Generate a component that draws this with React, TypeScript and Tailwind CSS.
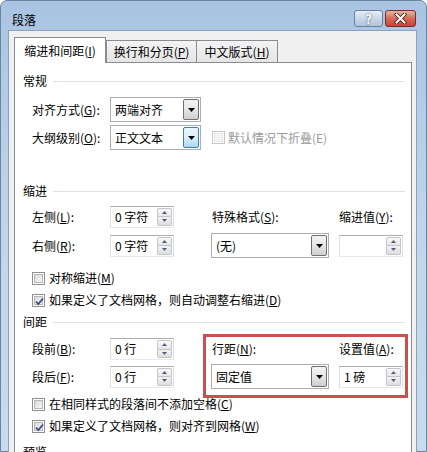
import React from 'react';

// Win7 style "段落" paragraph dialog

function Arrow({ up = false }: { up?: boolean }) {
  return (
    <svg width="5" height="3" viewBox="0 0 5 3">
      <path d={up ? 'M0 3h5L2.5 0z' : 'M0 0h5L2.5 3z'} fill="#4e5f7c" />
    </svg>
  );
}

function Spin({ value = '' }: { value?: string }) {
  return (
    <div className="flex h-[22px] w-[64px] items-center border border-[#abadb3] border-x-[#dbdfe6] border-b-[#e3e9ef] bg-white pl-[4px] pr-px">
      <span className="flex-1 whitespace-nowrap">{value}</span>
      <div className="flex h-[18px] w-[15px] flex-col">
        <div className="flex flex-1 items-center justify-center rounded-t-[2px] border border-[#c3c5c9] bg-linear-to-b from-[#f9f9f9] to-[#e6e6e6]">
          <Arrow up />
        </div>
        <div className="flex flex-1 items-center justify-center rounded-b-[2px] border border-t-0 border-[#c3c5c9] bg-linear-to-b from-[#f2f2f2] to-[#dedede]">
          <Arrow />
        </div>
      </div>
    </div>
  );
}

function Combo({
  value,
  className = '',
  focused = false,
}: {
  value: string;
  className?: string;
  focused?: boolean;
}) {
  return (
    <div className={`flex items-center border border-[#abadb3] bg-white pl-[4px] pr-px ${className}`}>
      <span className="flex-1 whitespace-nowrap">{value}</span>
      <div
        className={`my-px flex w-[16px] items-center justify-center self-stretch rounded-[2px] border ${
          focused
            ? 'border-[#3c7fb1] bg-linear-to-b from-[#eaf6fd] via-[#d9effc] to-[#a9daf5]'
            : 'border-[#707070] bg-linear-to-b from-[#f4f4f4] via-[#e6e6e6] to-[#cfcfcf]'
        }`}
      >
        <svg width="7" height="4" viewBox="0 0 7 4">
          <path d="M0 0h7L3.5 4z" fill="#000" />
        </svg>
      </div>
    </div>
  );
}

function Check({ checked = false, disabled = false }: { checked?: boolean; disabled?: boolean }) {
  return (
    <span
      className={`relative flex h-[13px] w-[13px] shrink-0 items-center justify-center border bg-white ${
        disabled ? 'border-[#c6c6c6]' : 'border-[#8e8f8f]'
      }`}
    >
      <span
        className={`h-[9px] w-[9px] border ${
          disabled
            ? 'border-[#e6e6e6] bg-[#f4f4f4]'
            : 'border-[#b4b6b9] bg-linear-to-br from-[#d9dadb] to-[#f7f7f7]'
        }`}
      />
      {checked && (
        <svg className="absolute left-[1px] top-[1px]" width="11" height="11" viewBox="0 0 11 11">
          <path d="M2 5.5l2.3 2.6L9 2.5" fill="none" stroke="#3b4f86" strokeWidth="1.8" />
        </svg>
      )}
    </span>
  );
}

function CheckRow({ label, checked = false }: { label: React.ReactNode; checked?: boolean }) {
  return (
    <div className="flex h-[20px] items-center gap-[4px] pl-[9px]">
      <Check checked={checked} />
      <span className="whitespace-nowrap">{label}</span>
    </div>
  );
}

function Section({ title, className = '' }: { title: string; className?: string }) {
  return (
    <div className={`flex h-[20px] items-center gap-[6px] ${className}`}>
      <span>{title}</span>
      <div className="h-px flex-1 bg-[#dde1e6]" />
    </div>
  );
}

export default function App() {
  return (
    <div className="h-[452px] w-[427px] overflow-hidden font-['Noto_Sans_CJK_SC','Microsoft_YaHei',sans-serif] text-[12px] leading-[16px] text-black">
      <div className="flex h-full flex-col rounded-t-[7px] border border-[#6d849f] bg-linear-to-b from-[#a9c4e3] via-[#c0d5eb] to-[#c8dbef]">
        {/* Title bar */}
        <div className="flex h-[29px] shrink-0 items-start">
          <span className="ml-[11px] mt-[11px]">段落</span>
          <div className="ml-auto mr-[10px] mt-[9px] flex gap-[2px]">
            <div className="flex h-[17px] w-[29px] items-center justify-center rounded-[3px] border border-[#6b7f99] bg-linear-to-b from-[#e6eef8] via-[#cbd8e8] to-[#b2c4da] text-[13px] font-bold leading-none text-white [text-shadow:0_0_2px_#2c3e57]">
              ?
            </div>
            <div className="flex h-[17px] w-[31px] items-center justify-center rounded-[3px] border border-[#7b2d25] bg-linear-to-b from-[#eab2a4] via-[#d36a57] to-[#c5443a]">
              <svg width="13" height="11" viewBox="0 0 13 11">
                <path d="M2.5 1.5l8 8M10.5 1.5l-8 8" stroke="#4a1510" strokeWidth="3.6" strokeLinecap="square" />
                <path d="M2.5 1.5l8 8M10.5 1.5l-8 8" stroke="#fff" strokeWidth="2" strokeLinecap="square" />
              </svg>
            </div>
          </div>
        </div>

        {/* Dialog body */}
        <div className="ml-[7px] mr-[9px] flex flex-1 flex-col border border-b-0 border-[#8ca2ba] bg-[#f0f0f0] pl-[5px] pr-[4px] pt-[6px]">
          {/* Tabs */}
          <div className="flex h-[25px] shrink-0 items-end">
            <div className="relative z-10 -mb-px flex h-[26px] w-[92px] items-center justify-center border border-b-0 border-[#898c95] bg-white">
              缩进和间距(<u>I</u>)
            </div>
            <div className="flex h-[22px] w-[91px] items-center justify-center border border-b-0 border-[#898c95] bg-linear-to-b from-[#f3f3f3] to-[#e5e5e5]">
              换行和分页(<u>P</u>)
            </div>
            <div className="flex h-[22px] w-[81px] items-center justify-center border border-b-0 border-l-0 border-[#898c95] bg-linear-to-b from-[#f3f3f3] to-[#e5e5e5]">
              中文版式(<u>H</u>)
            </div>
          </div>

          {/* Tab panel */}
          <div className="flex flex-1 flex-col border border-b-0 border-[#898c95] bg-white pl-[8px] pr-[6px] pt-[8px]">
            <Section title="常规" />

            <div className="mt-[6px] grid grid-cols-[78px_91px_1fr] grid-rows-[25px_25px] items-center gap-y-[3px] pl-[9px]">
              <span>对齐方式(<u>G</u>):</span>
              <Combo value="两端对齐" className="h-[25px]" />
              <span />
              <span>大纲级别(<u>O</u>):</span>
              <Combo value="正文文本" className="h-[25px]" focused />
              <div className="ml-[11px] flex items-center gap-[3px] text-[#9a9a9a]">
                <Check disabled />
                <span>默认情况下折叠(E)</span>
              </div>
            </div>

            <Section title="缩进" className="mt-[31px]" />

            <div className="mt-[3px] grid grid-cols-[78px_101px_128px_64px] grid-rows-[25px_25px] items-center gap-y-[4px] pl-[9px]">
              <span>左侧(<u>L</u>):</span>
              <Spin value="0 字符" />
              <span className="pl-px">特殊格式(<u>S</u>):</span>
              <span>缩进值(<u>Y</u>):</span>
              <span>右侧(<u>R</u>):</span>
              <Spin value="0 字符" />
              <Combo value="(无)" className="h-[25px] w-[118px]" />
              <Spin />
            </div>

            <div className="mt-[10px]">
              <CheckRow label={<>对称缩进(<u>M</u>)</>} />
            </div>
            <div className="mt-[2px]">
              <CheckRow checked label={<>如果定义了文档网格，则自动调整右缩进(<u>D</u>)</>} />
            </div>

            <Section title="间距" className="mt-[2px]" />

            <div className="mt-[5px] grid grid-cols-[78px_101px_192px] grid-rows-[24px_25px] items-center gap-y-[3px] pl-[9px]">
              <span className="col-start-1 row-start-1">段前(<u>B</u>):</span>
              <div className="col-start-2 row-start-1">
                <Spin value="0 行" />
              </div>
              <span className="col-start-1 row-start-2">段后(<u>F</u>):</span>
              <div className="col-start-2 row-start-2">
                <Spin value="0 行" />
              </div>

              {/* Line spacing group, marked with a red box */}
              <div className="relative col-start-3 row-span-2 row-start-1 grid grid-cols-[128px_64px] grid-rows-[24px_25px] items-center gap-y-[3px] self-stretch">
                <span className="pl-px">行距(<u>N</u>):</span>
                <span>设置值(<u>A</u>):</span>
                <Combo value="固定值" className="h-[25px] w-[118px]" />
                <Spin value="1 磅" />
                <div className="pointer-events-none absolute -bottom-[9px] -left-[8px] -right-[5px] -top-[3px] border-[3px] border-[#c8504e]" />
              </div>
            </div>

            <div className="mt-[5px]">
              <CheckRow label={<>在相同样式的段落间不添加空格(<u>C</u>)</>} />
            </div>
            <div className="mt-[2px]">
              <CheckRow checked label={<>如果定义了文档网格，则对齐到网格(<u>W</u>)</>} />
            </div>

            <Section title="预览" className="mt-[6px]" />
          </div>
        </div>
      </div>
    </div>
  );
}
